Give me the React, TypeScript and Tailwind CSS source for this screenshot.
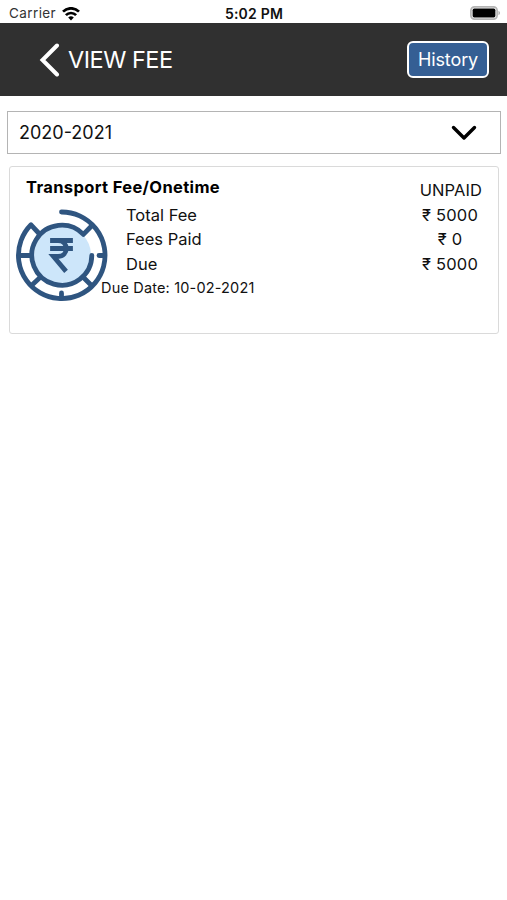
interface FeeRow {
  label: string;
  amount: string;
}

const feeRows: FeeRow[] = [
  { label: "Total Fee", amount: "5000" },
  { label: "Fees Paid", amount: "0" },
  { label: "Due", amount: "5000" },
];

export default function App() {
  return (
    <div className="min-h-screen w-full bg-white font-['Inter','Noto_Sans',sans-serif] text-[#111111]">
      <StatusBar />
      <Header />
      <main className="pt-[15px] pr-[6px] pl-[7px]">
        <YearSelect />
        <FeeCard />
      </main>
    </div>
  );
}

function StatusBar() {
  return (
    <div className="grid h-[23px] grid-cols-3 items-center pt-1 pr-[6px] pl-[7px]">
      <div className="flex items-center gap-[6px] pl-[2px]">
        <span className="text-[13.5px] leading-none tracking-[0.4px] text-[#333333]">Carrier</span>
        <WifiIcon />
      </div>
      <span className="text-center text-[14px] leading-none font-semibold tracking-[0.2px] whitespace-nowrap">
        5:02 PM
      </span>
      <div className="flex justify-end">
        <BatteryIcon />
      </div>
    </div>
  );
}

function Header() {
  return (
    <header className="flex h-[73px] items-center justify-between bg-[#303030] pr-[18px] pl-[39px] text-white">
      <div className="flex items-center gap-[8px]">
        <svg width="21" height="34" viewBox="0 0 21 34" fill="none">
          <path d="M18 2.5 3.5 17 18 31.5" stroke="white" strokeWidth="4" strokeLinecap="round" />
        </svg>
        <h1 className="text-[23.5px] leading-none tracking-[-0.5px]">VIEW FEE</h1>
      </div>
      <button className="h-[37px] w-[82px] rounded-[6px] border-[2.5px] border-white bg-[#355f94] text-[18px] leading-none tracking-[-0.1px]">
        History
      </button>
    </header>
  );
}

function YearSelect() {
  return (
    <button className="flex h-[43px] w-full items-center justify-between border border-[#b4b4b4] pr-[23px] pl-[11px]">
      <span className="text-[18px] leading-none">2020-2021</span>
      <svg width="26" height="16" viewBox="0 0 26 16" fill="none">
        <path d="M2.5 2.5 13 13 23.5 2.5" stroke="black" strokeWidth="3.4" strokeLinecap="round" strokeLinejoin="round" />
      </svg>
    </button>
  );
}

function FeeCard() {
  return (
    <section className="mx-[2px] mt-3 h-[168px] rounded-[3px] border border-[#dadada] pt-[8px] pr-4 pl-[5px]">
      <div className="flex h-[28px] justify-between pl-[11px]">
        <h2 className="text-[16.5px] leading-6 font-bold tracking-[0.35px] text-black">Transport Fee/Onetime</h2>
        <span className="pt-[3px] text-[16.5px] leading-6 tracking-[0.1px]">UNPAID</span>
      </div>
      <div className="flex">
        <div className="w-[86px] shrink-0 pt-[6px]">
          <RupeeIcon />
        </div>
        <div className="grow">
          {feeRows.map((row) => (
            <div key={row.label} className="flex h-[24.5px] items-center justify-between pl-[25px] text-[16.5px]">
              <span>{row.label}</span>
              <span className="w-[64px] text-center tracking-[0.2px]">₹ {row.amount}</span>
            </div>
          ))}
          <p className="text-[14.5px] leading-[22px] tracking-[0.17px]">Due Date: 10-02-2021</p>
        </div>
      </div>
    </section>
  );
}

function WifiIcon() {
  return (
    <svg width="18" height="14" viewBox="0 0 18 14" fill="none" stroke="black" strokeWidth="2.7">
      <path d="M1 4.6a11.3 11.3 0 0 1 16 0" />
      <path d="M3.9 8.1a7.2 7.2 0 0 1 10.2 0" />
      <path d="M9 13.5 6.2 10.6a4 4 0 0 1 5.6 0Z" fill="black" stroke="none" />
    </svg>
  );
}

function BatteryIcon() {
  return (
    <svg width="31" height="14" viewBox="0 0 31 14" className="relative -top-px">
      <rect x="0.9" y="0.9" width="26.2" height="12.2" rx="3.6" fill="white" stroke="#b4b4b4" strokeWidth="1.7" />
      <rect x="2.6" y="2.6" width="22.8" height="8.8" rx="1.6" fill="black" />
      <path d="M28.5 4.8c2 .8 2 3.6 0 4.4Z" fill="#aaaaaa" />
    </svg>
  );
}

function RupeeIcon() {
  return (
    <svg width="94" height="94" viewBox="0 0 94 94" fill="none" className="max-w-none">
      <circle cx="47.5" cy="46" r="28.5" fill="#cde6fa" />
      <g stroke="#2f5580" strokeWidth="4.8" strokeLinecap="round" strokeLinejoin="round">
        {/* outer ring, open at the top left */}
        <path d="M46.5 3A43.3 43.3 0 1 1 16 15.8L24.5 25" />
        {/* inner ring, open on the right */}
        <path d="M76.8 46.3A30 30 0 1 1 68.4 25.4L77 16.5" />
        <path d="M84 46.5H89M69 69 76 76M46.5 84V89M24.5 69 17 76M4 46.5H16" />
      </g>
      <path d="M37.5 31.5H55.5M37.5 39.5H55.5M37.5 31.5H43C54 31.5 54 47.5 43 47.5H38.5L49.5 60.5" stroke="#2f5580" strokeWidth="4.8" strokeLinecap="square" />
    </svg>
  );
}
